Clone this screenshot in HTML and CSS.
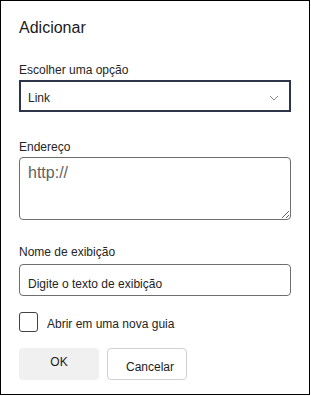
FILE: index.html
```html
<!DOCTYPE html>
<html lang="pt">
<head>
<meta charset="utf-8">
<link rel="stylesheet" href="styles.css">
</head>
<body>
<div class="panel">
  <h1 class="title">Adicionar</h1>

  <label class="label label-first">Escolher uma opção</label>
  <div class="dropdown">
    <span class="dropdown-value">Link</span>
    <svg class="chevron" width="10" height="6" viewBox="0 0 10 6"><path d="M1 1 L5 5 L9 1" fill="none" stroke="#8a8a8a" stroke-width="1"/></svg>
  </div>

  <label class="label label-address">Endereço</label>
  <textarea class="textarea" placeholder="http://"></textarea>

  <label class="label label-name">Nome de exibição</label>
  <div class="input">Digite o texto de exibição</div>

  <div class="check-row">
    <span class="checkbox"></span>
    <span class="check-label">Abrir em uma nova guia</span>
  </div>

  <div class="buttons">
    <button class="btn btn-ok">OK</button>
    <button class="btn btn-cancel">Cancelar</button>
  </div>
</div>
</body>
</html>
```

FILE: styles.css
```css
html, body {
  margin: 0;
  padding: 0;
  background: #fff;
}
body {
  font-family: "Liberation Sans", Arial, sans-serif;
  color: #242424;
}
.panel {
  box-sizing: border-box;
  width: 310px;
  height: 395px;
  border: 1px solid #000;
  padding: 17px 18px 0 18px;
  display: flex;
  flex-direction: column;
}
.title {
  margin: 0;
  font-size: 16px;
  line-height: 20px;
  font-weight: normal;
  color: #1b1b1b;
}
.label {
  display: block;
  font-size: 12px;
  line-height: 16px;
  color: #242424;
}
.label-first { margin-top: 24px; }
.label-address { margin-top: 27px; }
.label-name { margin-top: 24px; }

.dropdown {
  box-sizing: border-box;
  margin-top: 2px;
  width: 272px;
  height: 32px;
  border: 2px solid #2e3548;
  padding: 4px 10px 0 7px;
  display: flex;
  align-items: flex-start;
  justify-content: space-between;
}
.dropdown-value {
  font-size: 12px;
  line-height: 24px;
}
.chevron {
  margin-top: 9px;
}
.textarea {
  box-sizing: border-box;
  display: block;
  margin: 2px 0 0 0;
  width: 272px;
  height: 63px;
  border: 1px solid #6e6e6e;
  border-radius: 4px;
  padding: 6px 8px;
  font-family: "Liberation Sans", Arial, sans-serif;
  font-size: 16px;
  line-height: 18px;
  color: #242424;
  outline: none;
}
.textarea::placeholder {
  color: #616161;
  opacity: 1;
}
.input {
  box-sizing: border-box;
  margin-top: 4px;
  width: 272px;
  height: 32px;
  border: 1px solid #6e6e6e;
  border-radius: 4px;
  padding: 11px 8px 0 8px;
  font-size: 12px;
  line-height: 16px;
  color: #242424;
}
.check-row {
  margin-top: 16px;
  display: flex;
  align-items: center;
  gap: 9px;
  height: 20px;
}
.checkbox {
  box-sizing: border-box;
  width: 19px;
  height: 20px;
  border: 1px solid #424242;
  border-radius: 3px;
}
.check-label {
  font-size: 12px;
  line-height: 16px;
  padding-top: 4px;
}
.buttons {
  margin-top: 16px;
  display: flex;
  gap: 8px;
}
.btn {
  box-sizing: border-box;
  width: 80px;
  height: 32px;
  border-radius: 4px;
  font-family: "Liberation Sans", Arial, sans-serif;
  font-size: 12px;
  line-height: 16px;
  color: #1b1b1b;
  padding: 0;
}
.btn-ok {
  background: #f0f0f0;
  border: none;
  padding-bottom: 4px;
}
.btn-cancel {
  background: #fff;
  border: 1px solid #d1d1d1;
  padding-top: 6px;
  padding-left: 6px;
}
```
